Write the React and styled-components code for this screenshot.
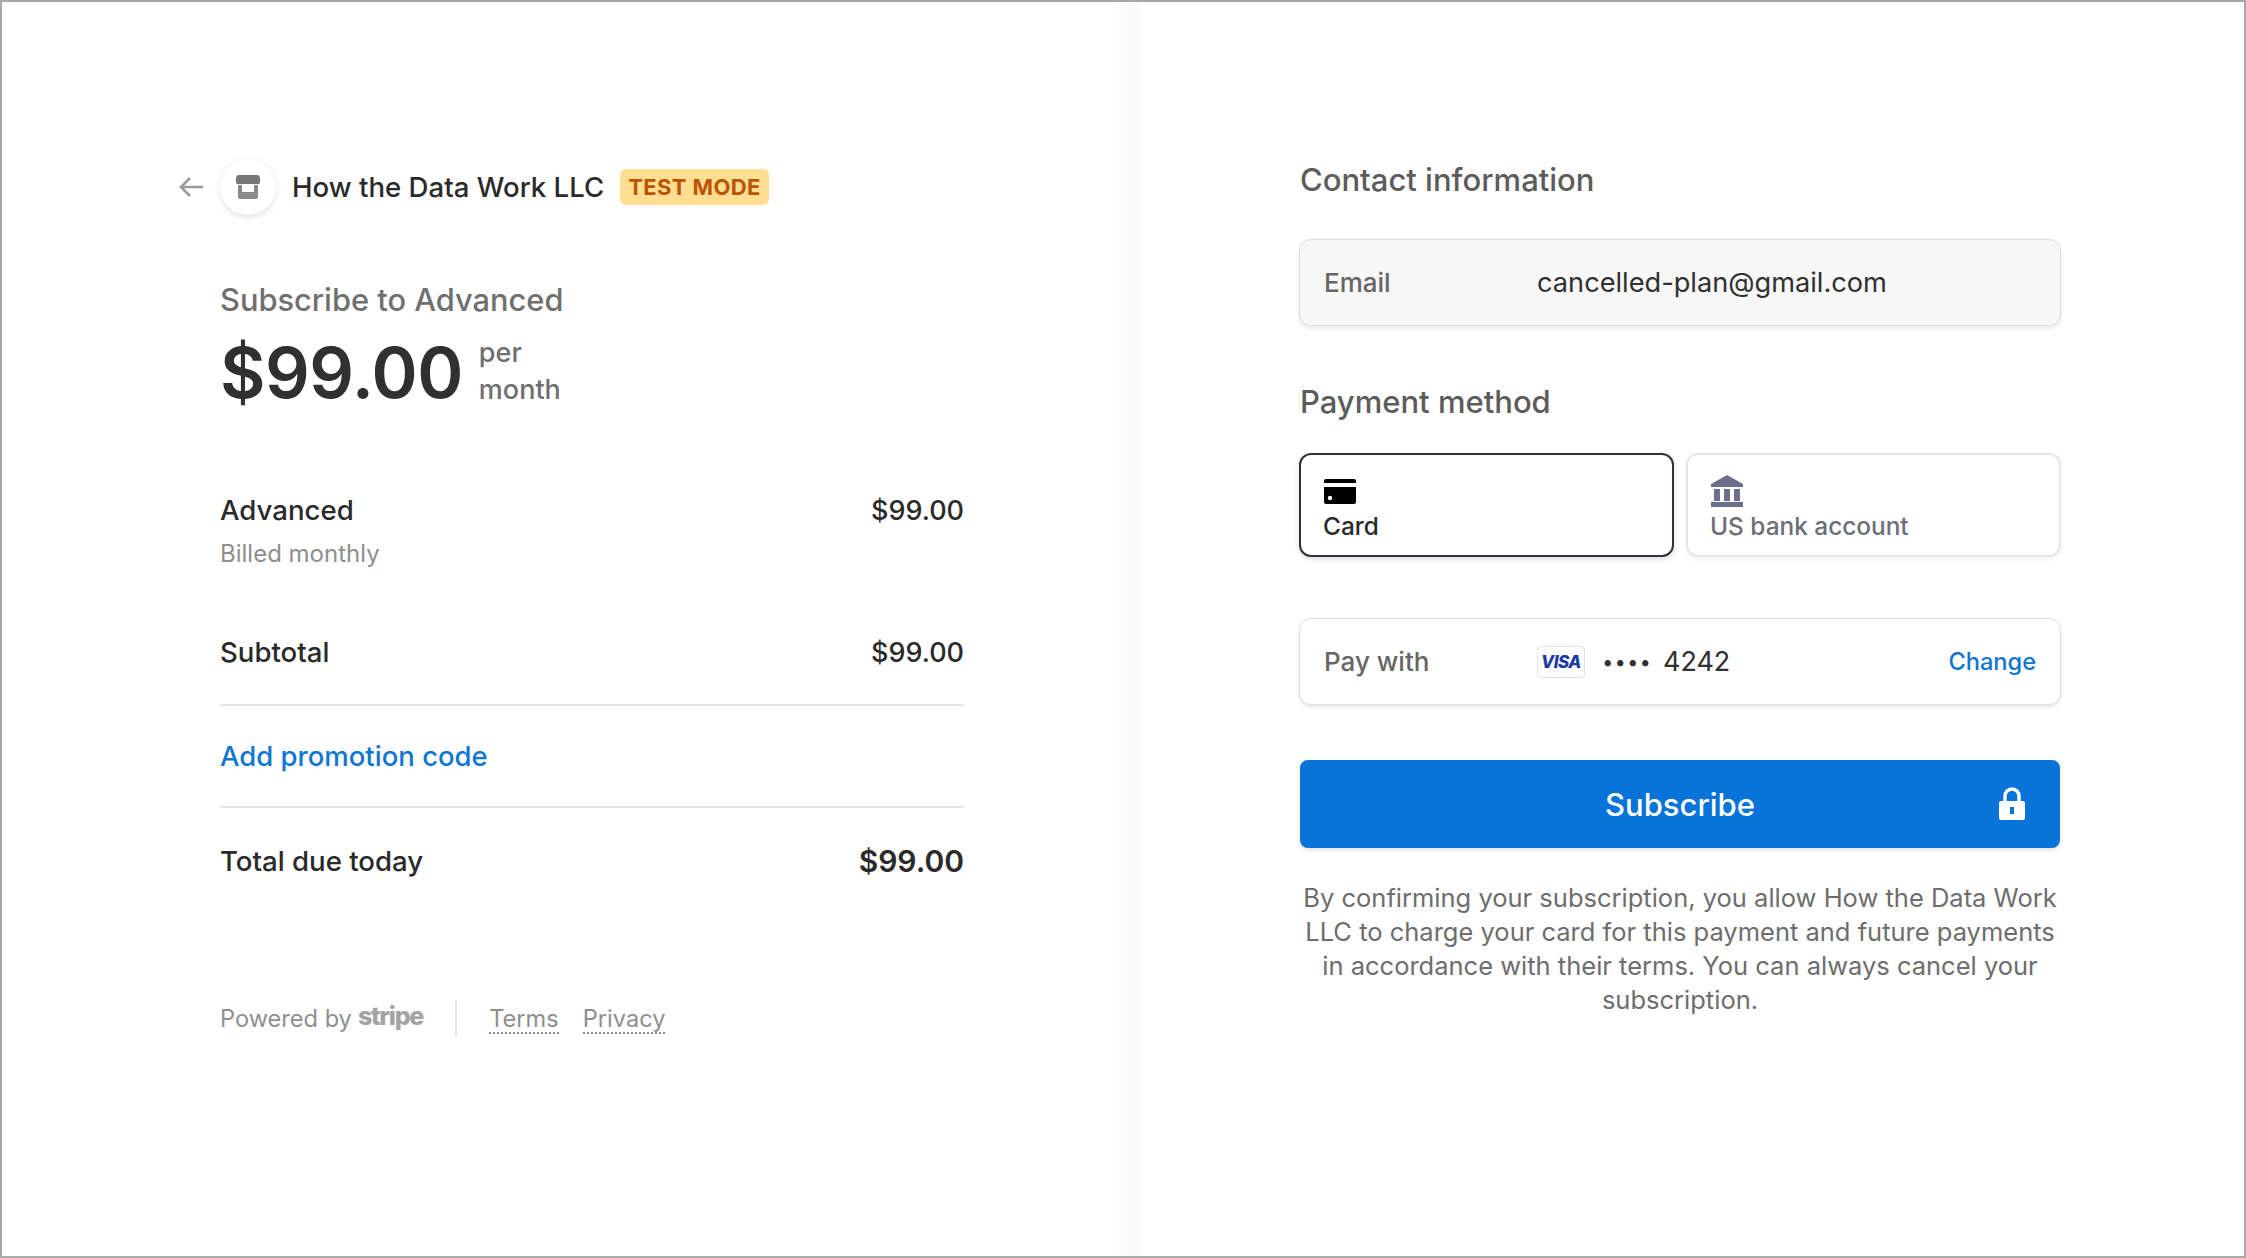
import React from "react"
import styled, { createGlobalStyle } from "styled-components"

const Global = createGlobalStyle`
  * { box-sizing: border-box; }
  html, body { margin: 0; padding: 0; background: #fff; }
  body { font-family: Inter, "Liberation Sans", sans-serif; color: #1f1f1f; -webkit-font-smoothing: antialiased; }
`

const Frame = styled.div`
  width: 2246px;
  height: 1258px;
  display: flex;
  overflow: hidden;
  border: 2px solid #a8a8a8;
  background: #fff;
`

const LeftPane = styled.section`
  width: 1138px;
  flex: none;
  padding: 158px 176px 0 218px;
  background: linear-gradient(to right, #fff 1108px, #fdfdfd 1112px, #f9f9f9 1138px);
`

const RightPane = styled.section`
  flex: 1;
  padding: 158px 0 0 159px;
`

const Header = styled.header`
  display: flex;
  align-items: center;
  height: 54px;
  margin-left: -42px;
`

const BackArrow = styled.svg`
  width: 26px;
  height: 22px;
  margin-right: 16px;
  flex: none;
`

const StoreBadge = styled.div`
  width: 56px;
  height: 56px;
  border-radius: 50%;
  background: #fff;
  box-shadow: 0 2px 6px rgba(0, 0, 0, 0.12);
  display: flex;
  align-items: center;
  justify-content: center;
  flex: none;
`

const Merchant = styled.span`
  margin-left: 16px;
  font-size: 27.6px;
  font-weight: 500;
  color: #2a2a2a;
  white-space: nowrap;
`

const TestBadge = styled.span`
  margin-left: 16px;
  padding: 0 8px;
  height: 36px;
  display: flex;
  align-items: center;
  border-radius: 6px;
  background: #ffde92;
  color: #bb5504;
  font-size: 22px;
  font-weight: 700;
  letter-spacing: 0.4px;
  white-space: nowrap;
`

const PlanTitle = styled.div`
  margin-top: 66px;
  font-size: 30.8px;
  font-weight: 500;
  line-height: 40px;
  color: #6f6f6f;
`

const PriceRow = styled.div`
  display: flex;
  align-items: center;
  margin-top: 10px;
  height: 84px;
`

const Price = styled.div`
  font-size: 70px;
  font-weight: 600;
  letter-spacing: -0.5px;
  color: #303030;
`

const Period = styled.div`
  margin: -2px 0 0 16px;
  font-size: 27px;
  font-weight: 500;
  line-height: 37px;
  color: #6f6f6f;
`

const LineItem = styled.div`
  display: flex;
  justify-content: space-between;
  align-items: center;
  height: ${(p) => p.$height}px;
  margin-top: ${(p) => p.$top || 0}px;
  font-size: 27.6px;
  font-weight: 500;
  color: #2a2a2a;
`

const Amount = styled.span`
  font-size: ${(p) => p.$size || 27}px;
  font-weight: ${(p) => p.$weight || 500};
`

const Sub = styled.div`
  margin-top: 9px;
  font-size: 24px;
  line-height: 30px;
  color: #8e8e8e;
`

const Divider = styled.hr`
  margin: 0;
  border: 0;
  border-top: 2px solid #e6e6e6;
`

const PromoLink = styled.div`
  display: flex;
  align-items: center;
  height: 100px;
  font-size: 27.5px;
  font-weight: 500;
  color: #0f76d2;
`

const Footer = styled.footer`
  display: flex;
  align-items: center;
  margin-top: 119px;
  height: 36px;
  font-size: 23.6px;
  color: #8f8f8f;
`

const StripeWord = styled.span`
  margin-left: 6px;
  font-weight: 800;
  font-size: 25px;
  letter-spacing: -1.2px;
  color: #a3a3a3;
  position: relative;
  top: -2px;
`

const FooterRule = styled.div`
  width: 2px;
  height: 36px;
  margin: 0 32px;
  background: #e6e6e6;
`

const FooterLink = styled.span`
  margin-right: 24px;
  border-bottom: 2px dotted #8f8f8f;
  line-height: 26px;
  position: relative;
  top: 2px;
`

const Form = styled.div`
  width: 762px;
`

const SectionTitle = styled.h2`
  margin: ${(p) => p.$top || 0}px 0 0 1px;
  height: 40px;
  line-height: 40px;
  font-size: 31px;
  font-weight: 500;
  color: #5c5c5c;
`

const Field = styled.div`
  display: flex;
  align-items: center;
  height: 87px;
  margin-top: ${(p) => p.$top}px;
  padding: 0 24px;
  border-radius: 12px;
  background: ${(p) => (p.$filled ? "#f7f7f7" : "#fff")};
  border: 1px solid #dedede;
  box-shadow: 0 2px 4px rgba(0, 0, 0, 0.1);
  font-size: 26px;
`

const FieldLabel = styled.span`
  width: 213px;
  flex: none;
  font-weight: 500;
  color: #666;
`

const FieldValue = styled.span`
  flex: 1;
  display: flex;
  align-items: center;
  color: #303030;
  font-size: 27.2px;
`

const Tabs = styled.div`
  display: grid;
  grid-template-columns: 1fr 1fr;
  gap: 12px;
  margin-top: 31px;
`

const Tab = styled.div`
  height: 104px;
  padding: 20px 22px 0;
  border-radius: 12px;
  background: #fff;
  border: ${(p) => (p.$active ? "2px solid #30313d" : "2px solid #e6e6e6")};
  box-shadow: 0 2px 5px rgba(0, 0, 0, ${(p) => (p.$active ? 0.15 : 0.05)});
  color: ${(p) => (p.$active ? "#2a2a2a" : "#6d6e78")};
  font-size: 24.4px;
  font-weight: 500;
`

const TabIcon = styled.svg`
  display: block;
  width: 34px;
  height: 32px;
  margin-bottom: 4px;
`

const VisaMark = styled.span`
  height: 32px;
  width: 48px;
  flex: none;
  display: flex;
  align-items: center;
  justify-content: center;
  border: 1px solid #e2e2e2;
  border-radius: 4px;
  background: #fff;
  color: #1a3aa8;
  font-size: 17px;
  font-weight: 800;
  font-style: italic;
  letter-spacing: -0.5px;
`

const Dots = styled.span`
  margin-left: 18px;
  margin-right: 10px;
  letter-spacing: 3px;
  font-size: 20px;
  font-weight: 700;
`

const Digits = styled.span`
  font-size: 27px;
  font-weight: 400;
`

const ChangeLink = styled.span`
  color: #0f76d2;
  font-weight: 500;
  font-size: 23.6px;
`

const SubscribeButton = styled.button`
  position: relative;
  display: block;
  width: 760px;
  height: 88px;
  margin: 55px 0 0 1px;
  border: 0;
  border-radius: 8px;
  background: #0874d9;
  color: #fff;
  font: 500 31px Inter, "Liberation Sans", sans-serif;
  box-shadow: 0 2px 4px rgba(0, 0, 0, 0.12);
`

const LockIcon = styled.svg`
  position: absolute;
  right: 34px;
  top: 27px;
  width: 28px;
  height: 34px;
`

const Legal = styled.p`
  margin: 33px 0 0;
  font-size: 25.5px;
  line-height: 34px;
  text-align: center;
  color: #6d6d6d;
`

const App = () => {
  return (
    <Frame>
      <Global />
      <LeftPane>
        <Header>
          <BackArrow viewBox="0 0 26 22" fill="none" stroke="#9a9a9a" strokeWidth="2.6">
            <path d="M25 11H3M12 2l-9 9 9 9" />
          </BackArrow>
          <StoreBadge>
            <svg width="24" height="24" viewBox="0 0 24 24">
              <path d="M3 0h18a3 3 0 0 1 3 3v5a2 2 0 0 1-2 1H2a2 2 0 0 1-2-1V3a3 3 0 0 1 3-3z" fill="#777" />
              <path d="M2 10h4v7h12v-7h4v12a2 2 0 0 1-2 2H4a2 2 0 0 1-2-2z" fill="#8a8a8a" />
            </svg>
          </StoreBadge>
          <Merchant>How the Data Work LLC</Merchant>
          <TestBadge>TEST MODE</TestBadge>
        </Header>
        <PlanTitle>Subscribe to Advanced</PlanTitle>
        <PriceRow>
          <Price>$99.00</Price>
          <Period>
            per
            <br />
            month
          </Period>
        </PriceRow>
        <LineItem $height={40} $top={76}>
          <span>Advanced</span>
          <Amount>$99.00</Amount>
        </LineItem>
        <Sub>Billed monthly</Sub>
        <LineItem $height={40} $top={63}>
          <span>Subtotal</span>
          <Amount>$99.00</Amount>
        </LineItem>
        <LineItem $height={32} />
        <Divider />
        <PromoLink>Add promotion code</PromoLink>
        <Divider />
        <LineItem $height={40} $top={33}>
          <span>Total due today</span>
          <Amount $size={30} $weight={600}>$99.00</Amount>
        </LineItem>
        <Footer>
          <span>Powered by</span>
          <StripeWord>stripe</StripeWord>
          <FooterRule />
          <FooterLink>Terms</FooterLink>
          <FooterLink>Privacy</FooterLink>
        </Footer>
      </LeftPane>
      <RightPane>
        <Form>
          <SectionTitle>Contact information</SectionTitle>
          <Field $filled $top={39}>
            <FieldLabel>Email</FieldLabel>
            <FieldValue>cancelled-plan@gmail.com</FieldValue>
          </Field>
          <SectionTitle $top={56}>Payment method</SectionTitle>
          <Tabs>
            <Tab $active>
              <TabIcon viewBox="0 0 34 32">
                <path d="M1 6a2 2 0 0 1 2-2h28a2 2 0 0 1 2 2v2H1z" fill="#000" />
                <path d="M1 12h32v15a2 2 0 0 1-2 2H3a2 2 0 0 1-2-2z" fill="#000" />
                <circle cx="7" cy="23" r="2.2" fill="#fff" />
              </TabIcon>
              Card
            </Tab>
            <Tab>
              <TabIcon viewBox="0 0 34 32">
                <path d="M17 0l16 9v3H1V9z" fill="#6d6e8c" />
                <path d="M4 14h6v12H4zM14 14h6v12h-6zM24 14h6v12h-6zM1 27h32v5H1z" fill="#6d6e8c" />
              </TabIcon>
              US bank account
            </Tab>
          </Tabs>
          <Field $top={61}>
            <FieldLabel>Pay with</FieldLabel>
            <FieldValue>
              <VisaMark>VISA</VisaMark>
              <Dots>••••</Dots>
              <Digits>4242</Digits>
            </FieldValue>
            <ChangeLink>Change</ChangeLink>
          </Field>
          <SubscribeButton>
            Subscribe
            <LockIcon viewBox="0 0 28 34">
              <path d="M7 15V9a7 7 0 0 1 14 0v6" fill="none" stroke="#fff" strokeWidth="3.4" />
              <path fillRule="evenodd" fill="#fff" d="M3 14h22a2 2 0 0 1 2 2v15a2 2 0 0 1-2 2H3a2 2 0 0 1-2-2V16a2 2 0 0 1 2-2zM12 20v7h4v-7z" />
            </LockIcon>
          </SubscribeButton>
          <Legal>
            By confirming your subscription, you allow How the Data Work LLC to charge your card for this payment and future payments in accordance with their terms. You can always cancel your subscription.
          </Legal>
        </Form>
      </RightPane>
    </Frame>
  )
}

export default App
